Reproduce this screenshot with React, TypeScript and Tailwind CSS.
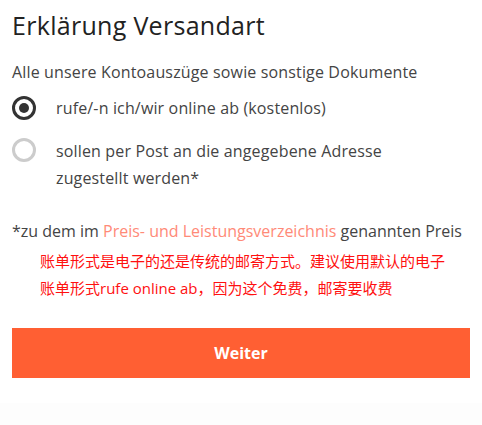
import React from "react";

export default function App() {
  const font = { fontFamily: '"Open Sans", "Noto Sans CJK SC", sans-serif' };
  return (
    <div className="w-[482px] h-[425px] bg-white flex flex-col text-[#333]" style={font}>
      <div className="flex flex-col px-3 pt-[10px]">
        <h1 className="text-[25px] leading-[30px] tracking-[0.3px] text-[#222]">Erklärung Versandart</h1>
        <p className="mt-[22px] text-[16px] leading-[20px] tracking-[0.15px] text-[#444]">Alle unsere Kontoauszüge sowie sonstige Dokumente</p>
        <div className="mt-[14px] flex items-start gap-[20px]">
          <span className="w-[24px] h-[24px] rounded-full border-[3px] border-[#333] flex items-center justify-center shrink-0">
            <span className="w-[10px] h-[10px] rounded-full bg-[#333]" />
          </span>
          <span className="text-[16px] leading-[24px] tracking-[0.15px] text-[#444]">rufe/-n ich/wir online ab (kostenlos)</span>
        </div>
        <div className="mt-[18px] flex items-start gap-[20px]">
          <span className="w-[24px] h-[24px] rounded-full border-[3px] border-[#ccc] shrink-0" />
          <span className="text-[16px] leading-[27px] tracking-[0.15px] text-[#444]">sollen per Post an die angegebene Adresse<br />zugestellt werden*</span>
        </div>
        <p className="mt-[29px] text-[16px] leading-[20px] text-[#444]">
          *zu dem im <span className="text-[#ff8a78]">Preis- und Leistungsverzeichnis</span> genannten Preis
        </p>
        <p className="mt-[7px] pl-[28px] text-[15px] leading-[27px] text-[#ff1010]">
          账单形式是电子的还是传统的邮寄方式。建议使用默认的电子<br />账单形式rufe online ab，因为这个免费，邮寄要收费
        </p>
        <button className="mt-[26px] h-[50px] w-full bg-[#ff5f33] text-white font-bold text-[16px]">Weiter</button>
      </div>
      <div className="flex-1" />
      <div className="h-[22px] bg-[#fdfdfd]" />
    </div>
  );
}
